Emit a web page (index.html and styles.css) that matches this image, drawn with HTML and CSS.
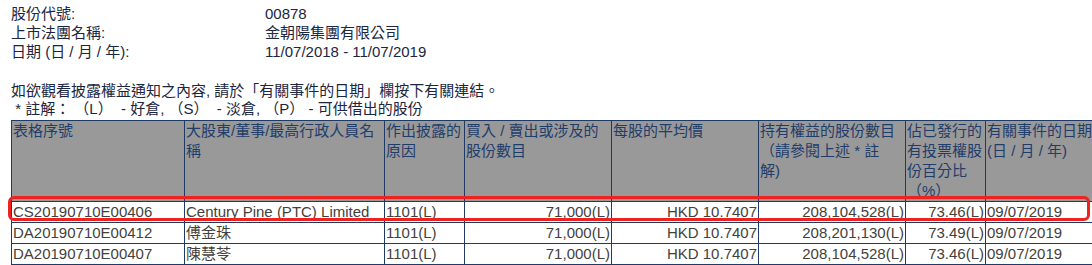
FILE: index.html
```html
<!DOCTYPE html>
<html lang="zh-Hant">
<head>
<meta charset="utf-8">
<title>披露權益</title>
<link rel="stylesheet" href="styles.css">
</head>
<body>
<div class="page">
  <div class="info">
    <div class="label">股份代號:</div><div class="value">00878</div>
    <div class="label">上市法團名稱:</div><div class="value">金朝陽集團有限公司</div>
    <div class="label">日期 (日 / 月 / 年):</div><div class="value">11/07/2018 - 11/07/2019</div>
  </div>
  <p class="note">如欲觀看披露權益通知之內容, 請於「有關事件的日期」欄按下有關連結。</p>
  <p class="legend">&nbsp;* 註解：&nbsp;（L）&nbsp;&nbsp;- 好倉, （S）&nbsp;&nbsp;- 淡倉, （P）&nbsp;- 可供借出的股份</p>
  <div class="table-wrap">
    <table class="grid">
      <colgroup>
        <col class="c1"><col class="c2"><col class="c3"><col class="c4"><col class="c5"><col class="c6"><col class="c7"><col class="c8">
      </colgroup>
      <thead>
        <tr>
          <th>表格序號</th>
          <th>大股東/董事/最高行政人員名<br>稱</th>
          <th>作出披露的<br>原因</th>
          <th>買入 / 賣出或涉及的<br>股份數目</th>
          <th>每股的平均價</th>
          <th>持有權益的股份數目<br>（請參閱上述 * 註<br>解)</th>
          <th>佔已發行的<br>有投票權股<br>份百分比<br>（%）</th>
          <th>有關事件的日期<br>(日 / 月 / 年)</th>
        </tr>
      </thead>
      <tbody>
        <tr>
          <td>CS20190710E00406</td>
          <td>Century Pine (PTC) Limited</td>
          <td>1101(L)</td>
          <td class="num">71,000(L)</td>
          <td class="num">HKD 10.7407</td>
          <td class="num">208,104,528(L)</td>
          <td class="num">73.46(L)</td>
          <td>09/07/2019</td>
        </tr>
        <tr>
          <td>DA20190710E00412</td>
          <td>傅金珠</td>
          <td>1101(L)</td>
          <td class="num">71,000(L)</td>
          <td class="num">HKD 10.7407</td>
          <td class="num">208,201,130(L)</td>
          <td class="num">73.49(L)</td>
          <td>09/07/2019</td>
        </tr>
        <tr>
          <td>DA20190710E00407</td>
          <td>陳慧苓</td>
          <td>1101(L)</td>
          <td class="num">71,000(L)</td>
          <td class="num">HKD 10.7407</td>
          <td class="num">208,104,528(L)</td>
          <td class="num">73.46(L)</td>
          <td>09/07/2019</td>
        </tr>
      </tbody>
    </table>
    <div class="highlight"></div>
  </div>
</div>
</body>
</html>
```
FILE: styles.css
```css
html, body {
  margin: 0;
  padding: 0;
  background: #ffffff;
  overflow: hidden;
}

body {
  font-family: "Liberation Sans", Arial, "Noto Sans CJK TC", sans-serif;
  font-size: 15px;
  color: #1b2640;
}

.page {
  padding: 4px 0 0 11px;
}

.info {
  display: grid;
  grid-template-columns: 254px auto;
  line-height: 19px;
}

.note {
  margin: 20px 0 0 0;
  line-height: 19px;
}

.legend {
  margin: 0;
  line-height: 18px;
}

.table-wrap {
  position: relative;
  margin-top: 2px;
  width: 1100px;
}

.grid {
  border-collapse: collapse;
  table-layout: fixed;
  width: 1084px;
}

.c1 { width: 173px; }
.c2 { width: 200px; }
.c3 { width: 80px; }
.c4 { width: 147px; }
.c5 { width: 147px; }
.c6 { width: 147px; }
.c7 { width: 80px; }
.c8 { width: 110px; }

.grid th,
.grid td {
  border: 1px solid #1f3a64;
  padding: 0 0 0 1px;
  line-height: 20px;
  white-space: nowrap;
  overflow: hidden;
}

.grid th {
  background: #999999;
  color: #1f3d6b;
  font-weight: normal;
  text-align: left;
  vertical-align: top;
  height: 80px;
}

.grid td {
  color: #433f3b;
  text-align: left;
  vertical-align: middle;
}

.grid td.num {
  text-align: right;
  padding: 0 1px 0 0;
}

.highlight {
  position: absolute;
  left: -3px;
  top: 76px;
  width: 1076px;
  height: 19px;
  border: 3px solid #ec2320;
  border-radius: 6px;
  pointer-events: none;
}
```
